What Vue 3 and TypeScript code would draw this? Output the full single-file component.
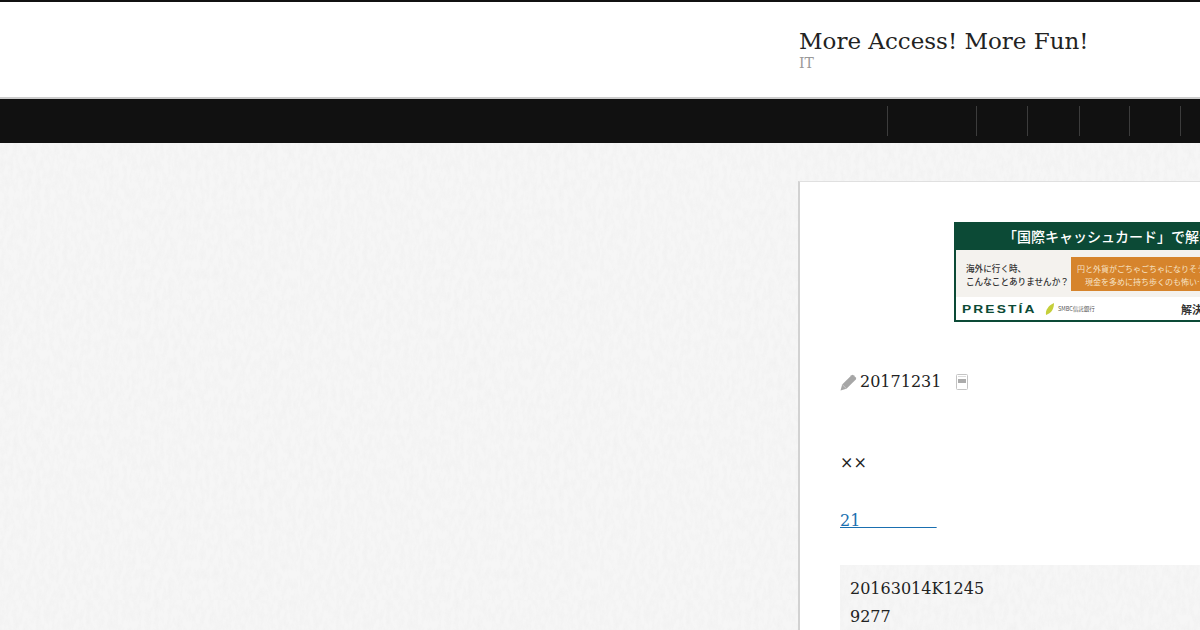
<script setup lang="ts">
const navItems = [89, 51, 52, 50, 51, 50]
</script>

<template>
  <div class="page">
    <header class="site-header">
      <div class="branding">
        <h1 class="site-title">More Access! More Fun!</h1>
        <p class="site-desc">IT</p>
      </div>
    </header>

    <nav class="site-nav">
      <span v-for="(w, i) in navItems" :key="i" class="nav-item" :style="{ width: w + 'px' }"></span>
    </nav>

    <main class="content">
      <article class="card">
        <div class="banner">
          <div class="banner-head">「国際キャッシュカード」で解決</div>
          <div class="banner-mid">
            <p class="banner-ask">海外に行く時、<br />こんなことありませんか？</p>
            <p class="banner-note">円と外貨がごちゃごちゃになりそう…<br />現金を多めに持ち歩くのも怖い…</p>
          </div>
          <div class="banner-foot">
            <span class="prestia">PRESTÍA</span>
            <svg class="leaf" width="10" height="14" viewBox="0 0 10 14">
              <path d="M1 13 C0 8 4 3 9 1 C9 6 7 11 1 13 Z" fill="#c5cf3a" />
            </svg>
            <span class="smbc">SMBC信託銀行</span>
            <span class="solve">解決</span>
          </div>
        </div>

        <div class="meta">
          <svg class="pencil" width="17" height="17" viewBox="0 0 17 17">
            <path d="M0.5 16.5 L2.2 10.5 L11.5 1.2 Q12.5 0.4 13.5 1.2 L15.8 3.5 Q16.6 4.5 15.8 5.5 L6.5 14.8 Z" fill="#a6a6a6" />
            <path d="M2.2 10.5 L6.5 14.8" stroke="#e4e4e4" stroke-width="0.6" fill="none" />
          </svg>
          <span class="date">20171231</span>
          <svg class="doc" width="12" height="16" viewBox="0 0 12 16">
            <rect x="0.5" y="0.5" width="11" height="15" rx="1" fill="#fff" stroke="#c4c4c4" />
            <rect x="2" y="5" width="8" height="4" fill="#ababab" />
            <path d="M2 2.5 H10" stroke="#dcdcdc" />
          </svg>
        </div>

        <p class="lead">××</p>
        <p class="linkline"><a href="#">21&nbsp;&nbsp;&nbsp;&nbsp;&nbsp;&nbsp;&nbsp;&nbsp;&nbsp;&nbsp;&nbsp;&nbsp;&nbsp;&nbsp;&nbsp;</a></p>

        <blockquote class="quote">
          <p>20163014K1245</p>
          <p>9277</p>
        </blockquote>
      </article>
    </main>
  </div>
</template>

<style>
html,
body {
  margin: 0;
  height: 630px;
  overflow: hidden;
}
</style>

<style scoped>
.page {
  width: 1200px;
  height: 630px;
  overflow: hidden;
  font-family: "DejaVu Serif", serif;
  font-size: 16px;
  color: #222;
  background-color: #f6f6f6;
  background-image: url("data:image/svg+xml,%3Csvg xmlns='http://www.w3.org/2000/svg' width='300' height='300'%3E%3Cfilter id='n'%3E%3CfeTurbulence type='fractalNoise' baseFrequency='0.22 0.1' numOctaves='3' stitchTiles='stitch'/%3E%3CfeColorMatrix values='0 0 0 0 0.6 0 0 0 0 0.6 0 0 0 0 0.6 0.22 0 0 0 -0.08'/%3E%3C/filter%3E%3Crect width='300' height='300' filter='url(%23n)'/%3E%3C/svg%3E");
}

.site-header {
  height: 95px;
  background: #fff;
  border-top: 2px solid #111;
  border-bottom: 2px solid #ccc;
  padding-left: 799px;
}

.site-title {
  margin: 0;
  padding-top: 26px;
  font-size: 23px;
  line-height: 27px;
  font-weight: normal;
  color: #222;
}

.site-desc {
  margin: 0;
  font-size: 14px;
  line-height: 16px;
  color: #999;
}

.site-nav {
  height: 44px;
  background: #111;
  display: flex;
  align-items: center;
  padding-left: 887px;
}

.nav-item {
  height: 30px;
  flex: none;
  box-sizing: border-box;
  border-left: 1px solid #3c3c3c;
}

.content {
  padding: 38px 0 0 798px;
}

.card {
  width: 600px;
  height: 600px;
  box-sizing: border-box;
  background: #fff;
  border-style: solid;
  border-color: #e0e0e0 #d2d2d2;
  border-width: 1px 0 0 2px;
  padding: 40px 0 0 40px;
}

.banner {
  width: 300px;
  height: 100px;
  margin-left: 114px;
  box-sizing: border-box;
  border: 2px solid #0c4a36;
  border-top-width: 0;
  display: flex;
  flex-direction: column;
  font-family: "Noto Sans CJK JP", sans-serif;
}

.banner-head {
  height: 28px;
  flex: none;
  background: #0c4a36;
  margin: 0 -2px;
  padding-left: 49px;
  color: #fff;
  font-size: 14px;
  font-weight: 500;
  line-height: 28px;
  white-space: nowrap;
}

.banner-mid {
  height: 47px;
  background: #f4f2ee;
  display: flex;
  align-items: center;
  flex: none;
}

.banner-mid p {
  margin: 0;
  white-space: nowrap;
}

.banner-ask {
  width: 115px;
  padding: 3px 0 0 10px;
  flex: none;
  box-sizing: border-box;
  font-size: 8.6px;
  font-weight: 500;
  line-height: 13px;
  color: #333;
}

.banner-note {
  height: 34px;
  width: 148px;
  flex: none;
  background: #d6842c;
  color: #f7e3c6;
  font-size: 8px;
  line-height: 13px;
  text-align: center;
  padding-top: 5px;
  box-sizing: border-box;
}

.banner-foot {
  flex: 1;
  background: #fff;
  display: flex;
  align-items: center;
  padding-left: 6px;
  white-space: nowrap;
}

.prestia {
  font-family: "Liberation Sans", sans-serif;
  font-size: 11px;
  font-weight: 700;
  letter-spacing: 1.7px;
  color: #0c4a36;
  transform: scaleX(1.25);
  transform-origin: left;
  width: 83px;
  flex: none;
}

.leaf {
  flex: none;
}

.smbc {
  margin-left: 3px;
  font-size: 5.5px;
  color: #555;
  width: 123px;
  flex: none;
}

.solve {
  font-size: 11px;
  font-weight: 700;
  color: #333;
}

.meta {
  display: flex;
  align-items: center;
  margin-top: 52px;
  height: 16px;
}

.pencil {
  flex: none;
}

.date {
  margin-left: 3px;
  line-height: 16px;
}

.doc {
  margin-left: 15px;
  flex: none;
}

.lead {
  margin: 59px 0 0;
  line-height: 28px;
}

.linkline {
  margin: 30px 0 0;
  line-height: 28px;
}

.linkline a {
  color: #1a6fb0;
  text-decoration: underline;
}

.quote {
  margin: 30px 0 0;
  padding: 10px 10px;
  line-height: 28px;
  background-color: #f6f6f6;
  background-image: url("data:image/svg+xml,%3Csvg xmlns='http://www.w3.org/2000/svg' width='300' height='300'%3E%3Cfilter id='n'%3E%3CfeTurbulence type='fractalNoise' baseFrequency='0.22 0.1' numOctaves='3' stitchTiles='stitch'/%3E%3CfeColorMatrix values='0 0 0 0 0.6 0 0 0 0 0.6 0 0 0 0 0.6 0.22 0 0 0 -0.08'/%3E%3C/filter%3E%3Crect width='300' height='300' filter='url(%23n)'/%3E%3C/svg%3E");
}

.quote p {
  margin: 0;
}
</style>
